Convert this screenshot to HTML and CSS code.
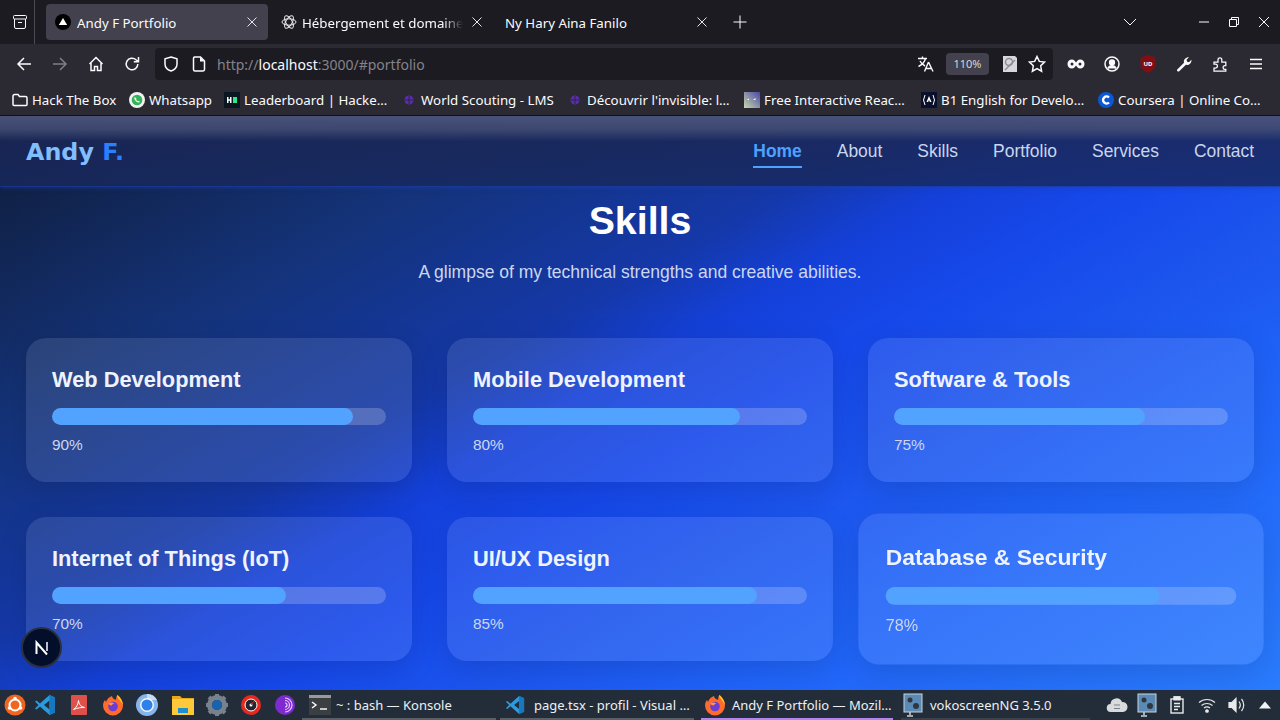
FILE: index.html
```html
<!DOCTYPE html>
<html lang="en">
<head>
<meta charset="utf-8">
<title>Andy F Portfolio</title>
<link rel="stylesheet" href="styles.css">
</head>
<body>
<div class="tabbar">
  <div class="tab-manager"><svg width="16" height="16" viewBox="0 0 16 16" class="ico"><rect x="1.5" y="1.5" width="13" height="3.5" rx="1"/><path d="M2.5 5v8a1.5 1.5 0 0 0 1.5 1.5h8a1.5 1.5 0 0 0 1.5-1.5V5M6 8.500h4"/></svg></div>
  <div class="tab active">
    <svg class="fav" width="16" height="16" viewBox="0 0 16 16"><circle cx="8" cy="8" r="8" fill="#000"/><path d="M8 4l4.200 7H3.800z" fill="#fff"/></svg>
    <span class="tab-label">Andy F Portfolio</span>
    <svg class="close" width="10" height="10" viewBox="0 0 10 10"><path d="M.5.500l9 9M9.500.500l-9 9"/></svg>
  </div>
  <div class="tab second">
    <svg class="fav" width="16" height="16" viewBox="0 0 16 16" fill="none" stroke="#e8e8ea" stroke-width="1"><ellipse cx="8" cy="8" rx="7" ry="3.200"/><ellipse cx="8" cy="8" rx="7" ry="3.200" transform="rotate(60 8 8)"/><ellipse cx="8" cy="8" rx="7" ry="3.200" transform="rotate(120 8 8)"/></svg>
    <span class="tab-label fade">Hébergement et domaine</span>
    <svg class="close" width="10" height="10" viewBox="0 0 10 10"><path d="M.5.500l9 9M9.500.500l-9 9"/></svg>
  </div>
  <div class="tab third">
    <span class="tab-label">Ny Hary Aina Fanilo</span>
    <svg class="close" width="10" height="10" viewBox="0 0 10 10"><path d="M.5.500l9 9M9.500.500l-9 9"/></svg>
  </div>
  <div class="newtab"><svg width="14" height="14" viewBox="0 0 14 14" class="ico"><path d="M7 .5v13M.5 7h13"/></svg></div>
  <div class="tabbar-right">
    <svg class="chev ico" width="14" height="8" viewBox="0 0 14 8"><path d="M1 1l6 6 6-6"/></svg>
    <svg class="win ico" width="10" height="10" viewBox="0 0 10 10"><path d="M0 5h10"/></svg>
    <svg class="win ico" width="10" height="10" viewBox="0 0 10 10"><path d="M.5 2.500h7v7h-7zM2.500 2.500v-2h7v7h-2"/></svg>
    <svg class="win ico" width="10" height="10" viewBox="0 0 10 10"><path d="M0 0l10 10M10 0L0 10"/></svg>
  </div>
</div>

<div class="toolbar">
  <div class="tool"><svg width="16" height="16" viewBox="0 0 16 16" class="ico strong"><path d="M15 8H2M8 2L2 8l6 6"/></svg></div>
  <div class="tool dim"><svg width="16" height="16" viewBox="0 0 16 16" class="ico strong"><path d="M1 8h13M8 2l6 6-6 6"/></svg></div>
  <div class="tool"><svg width="16" height="16" viewBox="0 0 16 16" class="ico strong"><path d="M1.500 8L8 1.500 14.500 8M3 7v7.500h3.500v-4h3v4H13V7"/></svg></div>
  <div class="tool"><svg width="16" height="16" viewBox="0 0 16 16" class="ico strong"><path d="M13.800 8a5.800 5.800 0 1 1-1.800-4.200L14 5.500M14.500 1v4.800H9.800"/></svg></div>
  <div class="urlbar">
    <svg class="url-shield ico strong" width="16" height="16" viewBox="0 0 16 16"><path d="M8 1l6 1.800V8c0 3.500-2.500 5.800-6 7-3.500-1.200-6-3.500-6-7V2.800z"/></svg>
    <svg class="url-page" width="14" height="16" viewBox="0 0 14 16"><path d="M2.500 1h6L12.500 5v8.500a1.500 1.500 0 0 1-1.500 1.500H3a1.500 1.500 0 0 1-1.500-1.500v-11A1.500 1.500 0 0 1 2.500 1z" fill="none" stroke="#fbfbfe" stroke-width="1.500"/><path d="M8 1l4.500 4.500H8z" fill="#fbfbfe"/></svg>
    <span class="url"><span class="url-dim">http://</span><span class="url-host">localhost</span><span class="url-dim">:3000/#portfolio</span></span>
    <div class="url-right">
      <svg class="ico translate" width="18" height="18" viewBox="0 0 18 18"><path d="M1 3.500h9M5.500 1.500v2M8.500 3.500C7.500 7.500 4.500 10 1.500 11.500M3 6c1 2 3 4 5 5M11.500 7L7.500 16.500M11.500 7l4.500 9.500M9 13.500h5"/></svg>
      <span class="zoom">110%</span>
      <svg width="16" height="18" viewBox="0 0 16 18"><path d="M1 1h12l2 2v14H1z" fill="#d8d8dc"/><circle cx="7" cy="7" r="3.500" fill="none" stroke="#8d8d93" stroke-width="1.500"/><path d="M3 15L13 5" stroke="#8d8d93" stroke-width="1.500"/></svg>
      <svg class="ico strong" width="18" height="18" viewBox="0 0 18 18"><path d="M9 1.500l2.300 4.900 5.200.7-3.800 3.700.9 5.400L9 13.600l-4.600 2.600.9-5.400L1.500 7.100l5.200-.7z"/></svg>
    </div>
  </div>
  <div class="tool first-ext"><svg width="18" height="10" viewBox="0 0 18 10"><path d="M5 .5C7 .5 8 2 9 3.500 10 2 11 .5 13 .5c2.800 0 4.500 2 4.500 4.500S15.800 9.500 13 9.500C11 9.500 10 8 9 6.500 8 8 7 9.500 5 9.500 2.200 9.500.5 7.500.5 5S2.200.5 5 .5z" fill="#fbfbfe"/><circle cx="5" cy="5" r="1.500" fill="#2b2a33"/><circle cx="13" cy="5" r="1.500" fill="#2b2a33"/></svg></div>
  <div class="tool"><svg width="16" height="16" viewBox="0 0 16 16" class="ico strong"><circle cx="8" cy="8" r="7"/><circle cx="8" cy="6.500" r="2.400" fill="#fbfbfe"/><path d="M3.800 12.500c1-2 2.500-2.800 4.200-2.800s3.200.8 4.200 2.800" fill="#fbfbfe"/></svg></div>
  <div class="tool"><svg width="16" height="18" viewBox="0 0 16 18"><path d="M8 0l7.500 2.400v7.100C15.500 13.500 12 16.300 8 18 4 16.300.5 13.500.5 9.500V2.400z" fill="#800f14"/><text x="8" y="11" class="ublock">UD</text></svg></div>
  <div class="tool"><svg width="16" height="16" viewBox="0 0 16 16"><path d="M1.500 13.200L8 6.800C7.200 4 9.600 1 13 1.200L10.500 3.800l.6 1.900 1.900.5L15.400 3.800c.4 3.200-2.600 5.800-5.500 5L3.200 15.200a1.200 1.200 0 0 1-1.700-2z" fill="#fbfbfe"/></svg></div>
  <div class="tool"><svg width="16" height="16" viewBox="0 0 16 16" class="ico puzzle"><path d="M1 6h4V3.800a1.900 1.900 0 0 1 3.800 0V6h4v3.500h-.8a1.900 1.900 0 0 0 0 3.800h.8V15H1v-3h1.500a1.900 1.900 0 0 0 0-3.800H1z" transform="translate(1 0)"/></svg></div>
  <div class="tool"><svg width="14" height="12" viewBox="0 0 14 12" class="ico strong"><path d="M1 1.500h12M1 6h12M1 10.500h12"/></svg></div>
</div>

<div class="bookmarks">
  <div class="bm"><svg width="16" height="14" viewBox="0 0 16 14" class="ico strong"><path d="M1 3a1.500 1.500 0 0 1 1.500-1.500h3.500l1.500 2h6A1.500 1.500 0 0 1 15 5v6.500a1 1 0 0 1-1 1H2a1 1 0 0 1-1-1z"/></svg><span class="w85">Hack The Box</span></div>
  <div class="bm"><svg width="16" height="16" viewBox="0 0 16 16"><circle cx="8" cy="8" r="8" fill="#f2f2f2"/><circle cx="8" cy="8" r="5.300" fill="#32b45a"/><path d="M5.800 5c-.8.900-.5 2.600 1 4.100s3.200 1.900 4.100 1l-1.300-1.300-.9.500c-.8-.3-1.300-1-1.600-1.700l.5-.9z" fill="#fff"/></svg><span class="w63">Whatsapp</span></div>
  <div class="bm"><svg width="16" height="16" viewBox="0 0 16 16"><rect width="16" height="16" fill="#0b1720"/><path d="M3 5h1.500v2.300H6V5h1.500v6H6V8.700H4.500V11H3z" fill="#fff"/><rect x="9" y="5" width="4" height="6" fill="#2ee88c"/></svg><span class="w145">Leaderboard | Hacke…</span></div>
  <div class="bm"><svg width="16" height="16" viewBox="0 0 16 16"><circle cx="8" cy="8" r="4.500" fill="#5b2bb5"/><path d="M8 4v8M4 8h8" stroke="#2b2a33" stroke-width="1"/></svg><span class="w134">World Scouting - LMS</span></div>
  <div class="bm"><svg width="16" height="16" viewBox="0 0 16 16"><circle cx="8" cy="8" r="4.500" fill="#5b2bb5"/><path d="M8 4v8M4 8h8" stroke="#2b2a33" stroke-width="1"/></svg><span class="w145">Découvrir l'invisible: l…</span></div>
  <div class="bm"><svg width="16" height="16" viewBox="0 0 16 16"><defs><linearGradient id="bmg" x1="0" y1="1" x2="1" y2="0"><stop offset="0" stop-color="#c8d8a8"/><stop offset="1" stop-color="#4a48a8"/></linearGradient></defs><rect width="16" height="16" fill="url(#bmg)"/><path d="M3 8l2-1.500V8zM9 8l2.500-2v2z" fill="#fff"/></svg><span class="w145">Free Interactive Reac…</span></div>
  <div class="bm"><svg width="16" height="16" viewBox="0 0 16 16"><rect width="16" height="16" fill="#0a0f2c"/><path d="M4 3L2.500 8 4 13M12 3l1.500 5L12 13" fill="none" stroke="#fff"/><path d="M8 4l2.500 6H8.900L8 8 7.100 10H5.500z" fill="#fff"/></svg><span class="w145">B1 English for Develo…</span></div>
  <div class="bm"><svg width="16" height="16" viewBox="0 0 16 16"><circle cx="8" cy="8" r="8" fill="#0a58d6"/><path d="M11 10.500A3.500 3.500 0 1 1 11 5.500" fill="none" stroke="#fff" stroke-width="2.400"/></svg><span class="w145">Coursera | Online Co…</span></div>
</div>

<main class="page">
  <nav class="site-nav">
    <div class="logo">Andy <span class="logo-accent">F.</span></div>
    <ul class="nav-links">
      <li class="nav-active">Home</li>
      <li>About</li>
      <li>Skills</li>
      <li>Portfolio</li>
      <li>Services</li>
      <li>Contact</li>
    </ul>
  </nav>
  <section class="skills">
    <h2 class="skills-title">Skills</h2>
    <p class="skills-sub">A glimpse of my technical strengths and creative abilities.</p>
    <div class="skills-grid">
      <article class="card"><h3>Web Development</h3><div class="track"><div class="fill" style="width:90%"></div></div><p>90%</p></article>
      <article class="card"><h3>Mobile Development</h3><div class="track"><div class="fill" style="width:80%"></div></div><p>80%</p></article>
      <article class="card"><h3>Software &amp; Tools</h3><div class="track"><div class="fill" style="width:75%"></div></div><p>75%</p></article>
      <article class="card"><h3>Internet of Things (IoT)</h3><div class="track"><div class="fill" style="width:70%"></div></div><p>70%</p></article>
      <article class="card"><h3>UI/UX Design</h3><div class="track"><div class="fill" style="width:85%"></div></div><p>85%</p></article>
      <article class="card hovered"><h3>Database &amp; Security</h3><div class="track"><div class="fill" style="width:78%"></div></div><p>78%</p></article>
    </div>
  </section>
  <div class="next-badge"><svg width="18" height="18" viewBox="0 0 18 18" fill="none" stroke="#fff" stroke-width="2"><path d="M3.500 15V3.500L14 15.500"/><path d="M14 3v9" stroke="#b8c0d0"/></svg></div>
</main>

<footer class="taskbar">
  <div class="launchers">
    <div class="launch"><svg width="22" height="22" viewBox="0 0 22 22"><circle cx="11" cy="11" r="10.500" fill="#f0651f"/><circle cx="11" cy="11" r="5.500" fill="none" stroke="#fff" stroke-width="2"/><circle cx="11" cy="4.500" r="1.800" fill="#fff"/><circle cx="5.500" cy="14" r="1.800" fill="#fff"/><circle cx="16.500" cy="14" r="1.800" fill="#fff"/></svg></div>
    <div class="launch"><svg width="22" height="22" viewBox="0 0 22 22"><path d="M15.500 1L21 3.500v15L15.500 21 6 12.500 2.500 15.500 1 14.500 4.500 11 1 7.500l1.500-1L6 9.500z" fill="#2b9be0"/><path d="M15.500 6.500L10 11l5.500 4.500z" fill="#232d3a"/><path d="M15.500 1L21 3.500v15L15.500 21z" fill="#1778c0"/></svg></div>
    <div class="launch"><svg width="18" height="22" viewBox="0 0 18 22"><rect x="1" y="1" width="16" height="20" rx="1" fill="#e0504a"/><path d="M3.500 15.500c3-2 4.500-5 5-9 .5 4 2 6 6 7-3-.2-7 .3-11 2z" fill="none" stroke="#fff" stroke-width="1"/></svg></div>
    <div class="launch"><svg width="22" height="22" viewBox="0 0 22 22"><use href="#fx"/></svg></div>
    <div class="launch"><svg width="22" height="22" viewBox="0 0 22 22"><circle cx="11" cy="11" r="11" fill="#86b4ec"/><path d="M11 0a11 11 0 0 1 10 6H11z" fill="#c9d9ee"/><circle cx="11" cy="11" r="7" fill="#f2f6fb"/><circle cx="11" cy="11" r="5.500" fill="#2f80e8"/></svg></div>
    <div class="launch"><svg width="22" height="20" viewBox="0 0 22 20"><path d="M0 1h8l2 2h12v3H0z" fill="#e8a818"/><rect y="4" width="22" height="16" fill="#fbc93a"/><rect x="6" y="13" width="10" height="5" fill="#1d8fd0"/></svg></div>
    <div class="launch"><svg width="22" height="22" viewBox="0 0 22 22"><circle cx="11" cy="11" r="7.500" fill="none" stroke="#77828c" stroke-width="5"/><g stroke="#77828c" stroke-width="4"><path d="M11 0v4M11 18v4M0 11h4M18 11h4M3 3l3 3M16 16l3 3M19 3l-3 3M6 16l-3 3"/></g><circle cx="11" cy="11" r="5" fill="#1763b0"/></svg></div>
    <div class="launch"><svg width="20" height="20" viewBox="0 0 20 20"><circle cx="10" cy="10" r="10" fill="#e8281e"/><circle cx="10" cy="10" r="6" fill="#22262e" stroke="#fff" stroke-width="1"/><circle cx="10" cy="10" r="1.500" fill="#fff"/><path d="M10 10l3-4" stroke="#e8281e"/></svg></div>
    <div class="launch"><svg width="20" height="20" viewBox="0 0 20 20"><circle cx="10" cy="10" r="10" fill="#7d2bd0"/><g fill="none" stroke="#e8c8ff" stroke-width="1.200"><path d="M10 3a7 7 0 0 1 0 14M10 5.500a4.500 4.500 0 0 1 0 9M10 8a2 2 0 0 1 0 4"/></g></svg></div>
  </div>
  <div class="task konsole"><svg width="22" height="20" viewBox="0 0 22 20"><rect width="22" height="20" fill="#3b3f42"/><rect width="22" height="3" fill="#9a9a9a"/><path d="M3 7l4 3-4 3" fill="none" stroke="#fff" stroke-width="1.400"/><path d="M11 14h7" stroke="#fff" stroke-width="1.400"/></svg><span>~ : bash — Konsole</span></div>
  <div class="task code"><svg width="20" height="20" viewBox="0 0 22 22"><path d="M15.500 1L21 3.500v15L15.500 21 6 12.500 2.500 15.500 1 14.500 4.500 11 1 7.500l1.500-1L6 9.500z" fill="#2b9be0"/><path d="M15.500 6.500L10 11l5.500 4.500z" fill="#232d3a"/><path d="M15.500 1L21 3.500v15L15.500 21z" fill="#1778c0"/></svg><span>page.tsx - profil - Visual …</span></div>
  <div class="task firefox"><svg width="22" height="22" viewBox="0 0 22 22"><defs><g id="fx"><path d="M11 21.500A10 10 0 0 1 1 11.500C1 9 2 7 3 6l1 2c1-3 3-5 6-6 0 2 2 3 4 4 0-2 .5-4 1.500-5C18 3 21 7 21 11.500a10 10 0 0 1-10 10z" fill="#ff6b2c"/><path d="M15 1c3 2 6 6 6 10.500 0-2-2-3-3-5-1-2-3-3-3-5.500z" fill="#ffc72b"/><circle cx="11" cy="12.500" r="4.800" fill="#6f3bd1"/><path d="M6.500 9.500c2-1.500 4-1 6 0-1.500 0-2.500 1-2.500 2-2 0-3-1-3.500-2z" fill="#ff9a2c"/></g></defs><use href="#fx"/></svg><span>Andy F Portfolio — Mozil…</span></div>
  <div class="task voko"><svg width="20" height="24" viewBox="0 0 20 24"><rect x="1" y="1" width="18" height="18" fill="#5a8ab5"/><rect x="1" y="1" width="18" height="18" fill="none" stroke="#c8d4de"/><circle cx="7" cy="7" r="2.500" fill="#30363c"/><circle cx="13" cy="13" r="3" fill="#30363c"/><path d="M7 19v3M4 23h6" stroke="#c8d4de" stroke-width="1.500"/></svg><span>vokoscreenNG 3.5.0</span></div>
  <div class="tray">
    <svg width="22" height="18" viewBox="0 0 22 18"><path d="M5 16a4 4 0 0 1-.5-8A6 6 0 0 1 16 6a5 5 0 0 1 1 10z" fill="#d8dadc"/><path d="M8 9h6M8 12.500h6" stroke="#7a8086" stroke-width="1.200"/></svg>
    <svg width="20" height="24" viewBox="0 0 20 24"><rect x="1" y="1" width="18" height="18" fill="#5a8ab5"/><rect x="1" y="1" width="18" height="18" fill="none" stroke="#c8d4de"/><circle cx="7" cy="7" r="2.500" fill="#30363c"/><circle cx="13" cy="13" r="3" fill="#30363c"/><path d="M7 19v3M4 23h6" stroke="#c8d4de" stroke-width="1.500"/></svg>
    <svg width="14" height="18" viewBox="0 0 14 18" fill="none" stroke="#e8eaec" stroke-width="1.400"><rect x="1" y="3" width="12" height="14"/><path d="M4 7.500h6M4 10.500h6M4 13.500h4"/><rect x="4" y=".8" width="6" height="3" fill="#e8eaec"/></svg>
    <svg width="18" height="16" viewBox="0 0 18 16" fill="none" stroke="#e8eaec" stroke-width="1.100"><path d="M1 5.500c4.500-4 11.500-4 16 0M3.500 8.500c3-2.700 8-2.700 11 0M6 11c1.700-1.300 4.300-1.300 6 0"/><circle cx="9" cy="14" r="1.300" fill="#e8eaec"/></svg>
    <svg width="18" height="18" viewBox="0 0 18 18" fill="none" stroke="#e8eaec" stroke-width="1.200"><path d="M1 6.500h3L8 2.500v13l-4-4H1z" fill="#e8eaec"/><path d="M11 5.500c1.500 2 1.500 5 0 7M13.500 3c3 3.500 3 8.500 0 12"/></svg>
    <svg width="12" height="8" viewBox="0 0 12 8"><path d="M6 .5L12 7.500H0z" fill="#f0f2f4"/></svg>
  </div>
</footer>
</body>
</html>
```

FILE: styles.css
```css
* { box-sizing: border-box; margin: 0; padding: 0; }
html, body { width: 1280px; height: 720px; overflow: hidden; }
body { display: flex; flex-direction: column; font-family: "Noto Sans", sans-serif; background: #1c1b22; }

.ico { fill: none; stroke: #fbfbfe; stroke-width: 1; }
.ico.strong { stroke-width: 1.500; }
.ico.translate { stroke-width: 1.400; }
.ico.puzzle { stroke-width: 1.250; }

.tabbar { height: 44px; flex: none; display: flex; align-items: center; background: #1c1b22; color: #fbfbfe; font-size: 13.3px; }
.tab-manager { width: 35px; height: 44px; flex: none; display: flex; align-items: center; justify-content: center; padding-left: 5px; border-right: 1px solid #4b4a52; margin-right: 11px; }
.tab { height: 36px; display: flex; align-items: center; flex: none; border-radius: 4px; }
.tab.active { width: 222px; background: #42414d; padding: 0 11px 0 9px; }
.tab.active .fav { margin-right: 6px; }
.tab.second { width: 222px; padding: 0 8px 0 13px; }
.tab.third { width: 222px; padding: 0 5px 0 15px; }
.tab .fav { flex: none; margin-right: 5px; }
.tab-label { flex: 1; white-space: nowrap; padding-top: 2px; }
.tab-label.fade { -webkit-mask-image: linear-gradient(90deg, #000 85%, transparent 97%); mask-image: linear-gradient(90deg, #000 85%, transparent 97%); margin-right: 4px; }
.close { flex: none; fill: none; stroke: #e6e6e9; stroke-width: 1; }
.newtab { width: 36px; height: 36px; display: flex; align-items: center; justify-content: center; margin-left: 10px; }
.tabbar-right { margin-left: auto; display: flex; align-items: center; gap: 20px; padding-right: 11px; }
.tabbar-right .chev { margin-right: 42px; }

.toolbar { height: 40px; flex: none; display: flex; align-items: center; padding: 0 6px; background: #2b2a33; }
.tool { width: 36px; height: 36px; flex: none; display: flex; align-items: center; justify-content: center; }
.tool.dim { opacity: .4; }
.urlbar { flex: 1; height: 32px; margin: 0 5px; background: #1c1b22; border-radius: 4px; display: flex; align-items: center; padding: 0 7px 0 8px; font-size: 14px; }
.url-shield { flex: none; }
.url-page { flex: none; margin-left: 13px; }
.url { margin-left: 11px; }
.url-dim { color: #84838b; }
.url-host { color: #fbfbfe; }
.url-right { margin-left: auto; display: flex; align-items: center; gap: 10px; }
.zoom { width: 43px; height: 22px; line-height: 22px; background: #42414d; border-radius: 4px; text-align: center; font-size: 11px; color: #d7d7db; margin-left: 1px; margin-right: 3px; }
.ublock { font: 700 6px "Noto Sans", sans-serif; fill: #fff; text-anchor: middle; }

.bookmarks { height: 32px; flex: none; display: flex; align-items: center; gap: 12px; padding: 1px 12px 0; background: #2b2a33; border-bottom: 1px solid #111; color: #fbfbfe; font-size: 13.3px; }
.bm { display: flex; align-items: center; gap: 4px; white-space: nowrap; flex: none; }
.w63 { width: 63px; }
.w85 { width: 85px; }
.w134 { width: 134px; }
.w145 { width: 145px; }

.page { flex: 1; min-height: 0; position: relative; overflow: hidden; color: #fff; font-family: "Liberation Sans", Arial, sans-serif; background: linear-gradient(150deg, #0f1b35 0%, #14337a 24%, #1438a8 40%, #1440d8 47%, #1648ea 55%, #1c55ee 65%, #1f62f8 75%, #2a7cff 100%); }
.site-nav { height: 70px; display: flex; align-items: center; justify-content: space-between; padding: 0 26px; background: linear-gradient(180deg, rgba(74,82,121,.98) 0%, rgba(62,72,112,.96) 19%, rgba(26,39,88,.85) 36%, rgba(23,40,92,.81) 100%); box-shadow: 0 1px 0 rgba(27,58,156,.6), 0 2px 4px rgba(30,64,175,.5); position: relative; }
.logo { font: 700 23.8px "DejaVu Sans", sans-serif; color: #82bdfd; padding-top: 1px; }
.logo-accent { color: #2a80ff; }
.nav-links { display: flex; gap: 35px; list-style: none; font-size: 17.45px; color: #c9d6ee; }
.nav-links li { padding: 7px 0 4px; border-bottom: 2px solid transparent; }
.nav-links .nav-active { color: #4ea2ff; font-weight: 700; border-bottom-color: #4ea2ff; }

.skills { padding: 0 26px; }
.skills-title { font-size: 39.300px; line-height: 46px; margin-top: 11px; text-align: center; font-weight: 700; }
.skills-sub { font-size: 17.52px; line-height: 20px; margin-top: 19px; text-align: center; color: #ccd7ee; }
.skills-grid { margin-top: 56px; display: grid; grid-template-columns: repeat(3, 1fr); gap: 35px; }
.card { height: 144px; padding: 26px; background: rgba(255,255,255,.1); border-radius: 20px; box-shadow: 0 8px 30px rgba(0,0,0,.12); }
.card.hovered { transform: scale(1.05); }
.card h3 { font-size: 21.8px; line-height: 30px; padding-top: 1px; color: #eef3ff; font-weight: 700; height: 32px; }
.track { height: 17px; margin-top: 12px; border-radius: 9px; background: rgba(255,255,255,.2); overflow: hidden; }
.fill { height: 100%; background: #52a2ff; border-radius: 9px; }
.card p { margin-top: 11px; font-size: 15.4px; line-height: 18px; color: #ccd7ee; }

.next-badge { position: absolute; left: 21px; top: 511px; width: 41px; height: 41px; border-radius: 50%; background: #030f2a; border: 2px solid #2a3040; display: flex; align-items: center; justify-content: center; }

.taskbar { height: 30px; flex: none; display: flex; align-items: center; background: #232d3a; color: #eef0f2; font-size: 13px; }
.launchers { display: flex; align-items: center; width: 302px; flex: none; }
.launch { width: 34px; height: 30px; display: flex; align-items: center; justify-content: center; flex: none; }
.launch:nth-child(1) { margin-left: -2px; }
.launch:nth-child(2) { margin-left: -4px; }
.launch:nth-child(6) { margin-left: 2px; }
.task { height: 30px; width: 194px; display: flex; align-items: center; gap: 5px; padding: 2px 0 0 7px; border-bottom: 2px solid #5a6068; white-space: nowrap; overflow: hidden; flex: none; }
.task.code { margin-left: 4px; padding-left: 5px; gap: 9px; }
.task.firefox { margin-left: 7px; width: 192px; padding-left: 3px; gap: 6px; border-bottom-color: #b184f0; }
.task.voko { margin-left: 8px; width: 189px; padding-left: 2px; gap: 7px; border-bottom-color: #3a424c; }
.tray { margin-left: auto; display: grid; grid-template-columns: repeat(5, 30px) 26px; justify-items: center; align-items: center; padding-right: 2px; }
```
